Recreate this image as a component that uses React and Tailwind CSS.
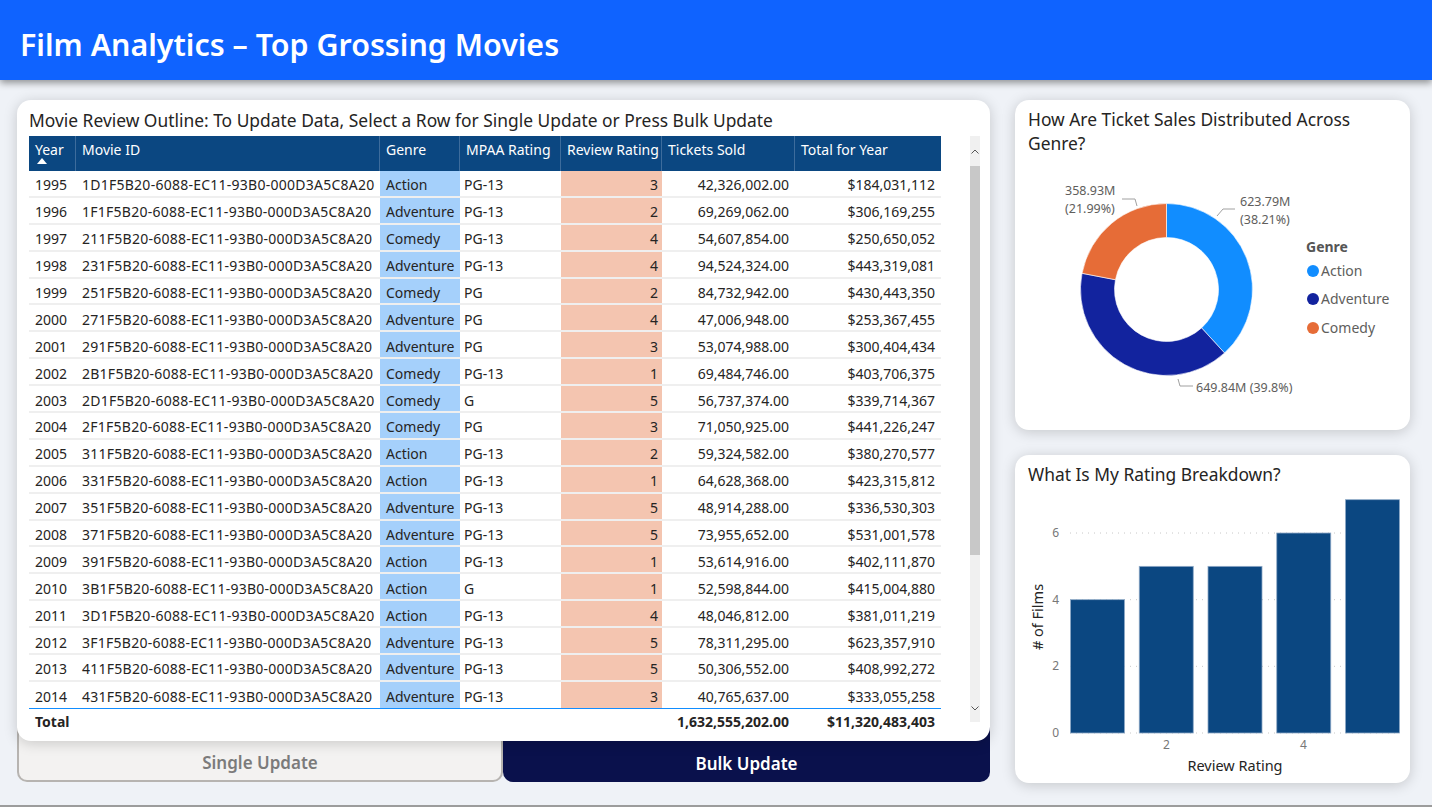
import React from 'react';

const SUFFIX = '1F5B20-6088-EC11-93B0-000D3A5C8A20';

const rows = [
  ['1995', '1D', 'Action', 'PG-13', 3, '42,326,002.00', '$184,031,112'],
  ['1996', '1F', 'Adventure', 'PG-13', 2, '69,269,062.00', '$306,169,255'],
  ['1997', '21', 'Comedy', 'PG-13', 4, '54,607,854.00', '$250,650,052'],
  ['1998', '23', 'Adventure', 'PG-13', 4, '94,524,324.00', '$443,319,081'],
  ['1999', '25', 'Comedy', 'PG', 2, '84,732,942.00', '$430,443,350'],
  ['2000', '27', 'Adventure', 'PG', 4, '47,006,948.00', '$253,367,455'],
  ['2001', '29', 'Adventure', 'PG', 3, '53,074,988.00', '$300,404,434'],
  ['2002', '2B', 'Comedy', 'PG-13', 1, '69,484,746.00', '$403,706,375'],
  ['2003', '2D', 'Comedy', 'G', 5, '56,737,374.00', '$339,714,367'],
  ['2004', '2F', 'Comedy', 'PG', 3, '71,050,925.00', '$441,226,247'],
  ['2005', '31', 'Action', 'PG-13', 2, '59,324,582.00', '$380,270,577'],
  ['2006', '33', 'Action', 'PG-13', 1, '64,628,368.00', '$423,315,812'],
  ['2007', '35', 'Adventure', 'PG-13', 5, '48,914,288.00', '$336,530,303'],
  ['2008', '37', 'Adventure', 'PG-13', 5, '73,955,652.00', '$531,001,578'],
  ['2009', '39', 'Action', 'PG-13', 1, '53,614,916.00', '$402,111,870'],
  ['2010', '3B', 'Action', 'G', 1, '52,598,844.00', '$415,004,880'],
  ['2011', '3D', 'Action', 'PG-13', 4, '48,046,812.00', '$381,011,219'],
  ['2012', '3F', 'Adventure', 'PG-13', 5, '78,311,295.00', '$623,357,910'],
  ['2013', '41', 'Adventure', 'PG-13', 5, '50,306,552.00', '$408,992,272'],
  ['2014', '43', 'Adventure', 'PG-13', 3, '40,765,637.00', '$333,055,258'],
];

const cols = 'grid grid-cols-[47px_304px_80px_101px_101px_133px_146px]';

function TableHeader() {
  const heads = ['Movie ID', 'Genre', 'MPAA Rating', 'Review Rating', 'Tickets Sold', 'Total for Year'];
  return (
    <div className={`${cols} h-[35px] bg-[#0b4781] text-white text-[14px]`}>
      <div className="pl-[6px] pt-[4px] leading-[20px] border-r border-[#3d6c9c] relative">
        Year
        <svg className="absolute left-[8px] top-[22px]" width="10" height="6" viewBox="0 0 10 6">
          <path d="M0 6 L5 0 L10 6 Z" fill="#fff" />
        </svg>
      </div>
      {heads.map((h, i) => (
        <div
          key={h}
          className={`pl-[6px] pt-[4px] leading-[20px] whitespace-nowrap ${i < heads.length - 1 ? 'border-r border-[#3d6c9c]' : ''}`}
        >
          {h}
        </div>
      ))}
    </div>
  );
}

function Row({ r, last }) {
  const line = last ? 'border-b border-[#118dff]' : 'border-b-2 border-[#efefef]';
  const cell = `h-[26.9px] pt-[3px] flex items-center ${line}`;
  return (
    <div className={`${cols} text-[14px] text-[#252423]`}>
      <div className={`${cell} pl-[6px]`}>{r[0]}</div>
      <div className={`${cell} pl-[6px] whitespace-nowrap tracking-[0.25px]`}>{r[1] + SUFFIX}</div>
      <div className={`${cell} pl-[6px] bg-[#a5d0fb]`}>{r[2]}</div>
      <div className={`${cell} pl-[4px]`}>{r[3]}</div>
      <div className={`${cell} justify-end pr-[4px] bg-[#f4c5b0]`}>{r[4]}</div>
      <div className={`${cell} justify-end pr-[6px]`}>{r[5]}</div>
      <div className={`${cell} justify-end pr-[6px]`}>{r[6]}</div>
    </div>
  );
}

function Scrollbar() {
  return (
    <div className="w-[10px] h-[586px] bg-[#f0f0f0] flex flex-col items-center">
      <div className="h-[30px] flex items-center justify-center">
        <svg width="8" height="5" viewBox="0 0 8 5">
          <path d="M0.5 4.5 L4 1 L7.5 4.5" fill="none" stroke="#555" strokeWidth="1" />
        </svg>
      </div>
      <div className="w-full h-[389px] bg-[#c8c8c8]" />
      <div className="flex-1" />
      <div className="h-[28px] flex items-center justify-center">
        <svg width="8" height="5" viewBox="0 0 8 5">
          <path d="M0.5 0.5 L4 4 L7.5 0.5" fill="none" stroke="#555" strokeWidth="1" />
        </svg>
      </div>
    </div>
  );
}

function TableCard() {
  return (
    <div className="relative z-10 bg-white rounded-[14px] shadow-[0_2px_14px_rgba(0,0,0,0.18)] pl-[12px] pr-[10px] pt-[8px] pb-[7px]">
      <div className="text-[17.4px] leading-[24px] text-[#252423] mb-[4px] whitespace-nowrap">
        Movie Review Outline: To Update Data, Select a Row for Single Update or Press Bulk Update
      </div>
      <div className="flex items-start">
        <div className="w-[912px]">
          <TableHeader />
          {rows.map((r, i) => (
            <Row key={r[0]} r={r} last={i === rows.length - 1} />
          ))}
          <div className={`${cols} h-[25px] text-[14px] font-bold text-[#252423]`}>
            <div className="pl-[6px] flex items-center">Total</div>
            <div />
            <div />
            <div />
            <div />
            <div className="flex items-center justify-end pr-[6px]">1,632,555,202.00</div>
            <div className="flex items-center justify-end pr-[6px]">$11,320,483,403</div>
          </div>
        </div>
        <div className="w-[30px]" />
        <Scrollbar />
      </div>
    </div>
  );
}

function arc(cx, cy, R, r, a0, a1) {
  const p = (rad, a) => {
    const t = ((a - 90) * Math.PI) / 180;
    return [cx + rad * Math.cos(t), cy + rad * Math.sin(t)];
  };
  const large = a1 - a0 > 180 ? 1 : 0;
  const [x0, y0] = p(R, a0);
  const [x1, y1] = p(R, a1);
  const [x2, y2] = p(r, a1);
  const [x3, y3] = p(r, a0);
  return `M${x0} ${y0} A${R} ${R} 0 ${large} 1 ${x1} ${y1} L${x2} ${y2} A${r} ${r} 0 ${large} 0 ${x3} ${y3} Z`;
}

function DonutCard() {
  const cx = 151.5;
  const cy = 134.5;
  const slices = [
    { from: 0, to: 137.56, color: '#118dff' },
    { from: 137.56, to: 280.84, color: '#12239e' },
    { from: 280.84, to: 360, color: '#e66c37' },
  ];
  return (
    <div className="h-[330px] bg-white rounded-[14px] shadow-[0_2px_14px_rgba(0,0,0,0.18)] flex flex-col">
      <div className="pl-[13px] pr-[30px] pt-[7px] text-[17.4px] leading-[24px] text-[#252423]">
        How Are Ticket Sales Distributed Across Genre?
      </div>
      <svg width="395" height="275" className="font-['Noto_Sans',sans-serif]">
        {slices.map((s) => (
          <path key={s.color} d={arc(cx, cy, 86, 52, s.from, s.to)} fill={s.color} stroke="#fff" strokeWidth="0.6" />
        ))}
        <polyline points="202,61 208,54 220,54" fill="none" stroke="#a0a0a0" strokeWidth="1" />
        <polyline points="122,51 120,44 107,44" fill="none" stroke="#a0a0a0" strokeWidth="1" />
        <polyline points="163,224 165,231 178,231" fill="none" stroke="#a0a0a0" strokeWidth="1" />
        <g fontSize="12.5" fill="#605e5c">
          <text x="50" y="40">358.93M</text>
          <text x="50" y="58">(21.99%)</text>
          <text x="225" y="51">623.79M</text>
          <text x="225" y="69">(38.21%)</text>
          <text x="181" y="237">649.84M (39.8%)</text>
        </g>
        <text x="291" y="97" fontSize="14" fontWeight="700" fill="#555">Genre</text>
        {[
          ['Action', '#118dff', 116],
          ['Adventure', '#12239e', 144],
          ['Comedy', '#e66c37', 173],
        ].map(([t, c, y]) => (
          <g key={t}>
            <circle cx="298" cy={y} r="6" fill={c} />
            <text x="306" y={y + 5} fontSize="14" fill="#605e5c">{t}</text>
          </g>
        ))}
      </svg>
    </div>
  );
}

function BarCard() {
  const y0 = 247;
  const unit = 33.33;
  const vals = [4, 5, 5, 6, 7];
  return (
    <div className="h-[328px] bg-white rounded-[14px] shadow-[0_2px_14px_rgba(0,0,0,0.18)] flex flex-col">
      <div className="pl-[13px] pt-[7px] text-[17.4px] leading-[24px] text-[#252423]">
        What Is My Rating Breakdown?
      </div>
      <svg width="395" height="297" className="font-['Noto_Sans',sans-serif]">
        {[0, 2, 4, 6].map((v) => (
          <g key={v}>
            <line x1="55" x2="385" y1={y0 - v * unit} y2={y0 - v * unit} stroke="#c8c8c8" strokeWidth="1" strokeDasharray="1 5" />
            <text x="44" y={y0 - v * unit + 4} fontSize="12" textAnchor="end" fill="#777">{v}</text>
          </g>
        ))}
        {vals.map((v, i) => (
          <rect
            key={i}
            x={55.5 + i * 68.75}
            y={y0 - v * unit}
            width="54"
            height={v * unit}
            fill="#0b4781"
            stroke="#8da8c6"
            strokeWidth="0.8"
          />
        ))}
        <text x="151.5" y="263" fontSize="12" textAnchor="middle" fill="#777">2</text>
        <text x="288.5" y="263" fontSize="12" textAnchor="middle" fill="#777">4</text>
        <text x="220" y="285" fontSize="14.5" textAnchor="middle" fill="#252423">Review Rating</text>
        <text x="0" y="0" fontSize="14.5" textAnchor="middle" fill="#252423" transform="translate(28 131) rotate(-90)">
          # of Films
        </text>
      </svg>
    </div>
  );
}

export default function App() {
  return (
    <div className="w-[1432px] h-[807px] bg-[#eff2f7] font-['Noto_Sans',sans-serif] border-b-2 border-[#9c9c9c] overflow-hidden">
      <header className="h-[80px] bg-[#0f63ff] shadow-[0_3px_7px_rgba(0,0,0,0.4)] flex items-center pl-[20px] relative z-20">
        <h1 className="text-[30.4px] font-semibold text-white pt-[10px]">
          Film Analytics – Top Grossing Movies
        </h1>
      </header>
      <main className="flex gap-[25px] pl-[17px] pt-[20px]">
        <div className="w-[973px] flex flex-col">
          <TableCard />
          <div className="flex -mt-[14px]">
            <button className="w-[486px] h-[55px] pt-[19px] bg-[#f3f2f1] border-2 border-t-0 border-[#b7b4b1] rounded-b-[10px] text-[17px] font-semibold text-[#7b7b7b]">
              Single Update
            </button>
            <button className="w-[487px] h-[55px] pt-[19px] bg-[#0a114c] rounded-b-[10px] text-[17px] font-semibold text-white">
              Bulk Update
            </button>
          </div>
        </div>
        <div className="w-[395px] flex flex-col gap-[25px]">
          <DonutCard />
          <BarCard />
        </div>
      </main>
    </div>
  );
}
